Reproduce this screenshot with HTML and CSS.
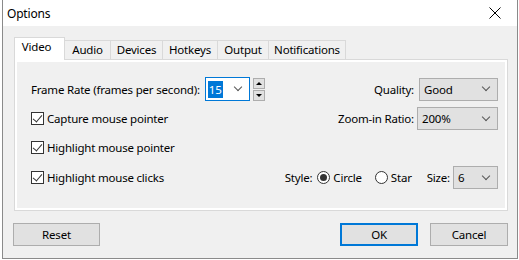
FILE: index.html
```html
<!DOCTYPE html>
<html lang="en">
  <head>
    <meta name="viewport" content="width=device-width, initial-scale=1.0" />
    <link rel="stylesheet" href="styles.css">
  </head>
  <body>
    <div class="window">
      <div class="titlebar">
        <span class="title">Options</span>
        <svg class="close" width="12" height="12" viewBox="0 0 12 12">
          <path d="M0.5 0.5 L11.5 11.5 M11.5 0.5 L0.5 11.5" stroke="#000" stroke-width="1" fill="none" />
        </svg>
      </div>

      <div class="content">
        <div class="tabs">
          <div class="tab selected tab-video">Video</div>
          <div class="tab tab-audio">Audio</div>
          <div class="tab tab-devices">Devices</div>
          <div class="tab tab-hotkeys">Hotkeys</div>
          <div class="tab tab-output">Output</div>
          <div class="tab tab-notify">Notifications</div>
        </div>

        <div class="panel">
          <div class="page">
            <div class="row row-1">
              <div class="group">
                <span class="label">Frame Rate (frames per second):</span>
                <div class="combo combo-edit">
                  <span class="sel">15</span>
                  <span class="chev"></span>
                </div>
                <div class="spin">
                  <div class="spin-btn"><span class="tri up"></span></div>
                  <div class="spin-btn"><span class="tri down"></span></div>
                </div>
              </div>
              <div class="group">
                <span class="label">Quality:</span>
                <div class="combo combo-quality"><span>Good</span><span class="chev"></span></div>
              </div>
            </div>

            <div class="row row-2">
              <label class="check"><span class="box"></span>Capture mouse pointer</label>
              <div class="group">
                <span class="label">Zoom-in Ratio:</span>
                <div class="combo combo-zoom"><span>200%</span><span class="chev"></span></div>
              </div>
            </div>

            <div class="row row-3">
              <label class="check"><span class="box"></span>Highlight mouse pointer</label>
            </div>

            <div class="row row-4">
              <label class="check"><span class="box"></span>Highlight mouse clicks</label>
              <div class="group">
                <span class="label">Style:</span>
                <span class="radio on"></span><span class="radio-text">Circle</span>
                <span class="radio"></span><span class="radio-text">Star</span>
                <span class="label size-label">Size:</span>
                <div class="combo combo-size"><span>6</span><span class="chev"></span></div>
              </div>
            </div>
          </div>
        </div>

        <div class="buttons">
          <div class="button btn-reset">Reset</div>
          <div class="spacer"></div>
          <div class="button btn-ok">OK</div>
          <div class="button btn-cancel">Cancel</div>
        </div>
      </div>
    </div>
  </body>
</html>
```

FILE: styles.css
```css
* {
  box-sizing: border-box;
}

body {
  margin: 0;
  background-color: #fff;
  font-family: "Noto Sans", sans-serif;
  font-size: 11.5px;
  letter-spacing: -0.2px;
  color: #000;
}

.window {
  width: 516px;
  height: 259px;
  margin-left: 2px;
  border: 1px solid #8a8a8a;
  border-top: none;
  background-color: #f0f0f0;
}

/* Title bar */
.titlebar {
  height: 26px;
  background-color: #fff;
  display: flex;
  align-items: center;
  padding-left: 4px;
  padding-right: 16px;
}

.title {
  flex: 1;
  font-size: 12px;
}

.close {
  display: block;
}

/* Tabs */
.content {
  padding: 11px 9px 0 11px;
}

.tabs {
  display: flex;
  align-items: flex-end;
  height: 23px;
  margin-bottom: -1px;
  position: relative;
  z-index: 1;
}

.tab {
  height: 20px;
  border: 1px solid #d9d9d9;
  border-left: none;
  background-color: #f0f0f0;
  text-align: center;
  line-height: 18px;
}

.tab.selected {
  height: 23px;
  border-left: 1px solid #d9d9d9;
  border-bottom: none;
  background-color: #fff;
  padding-right: 6px;
}

.tab-video { width: 51px; }
.tab-audio { width: 46px; }
.tab-devices { width: 52px; }
.tab-hotkeys { width: 55px; }
.tab-output { width: 51px; }
.tab-notify { width: 77px; }

.panel {
  width: 494px;
  border: 1px solid #d9d9d9;
  background-color: #fff;
  padding: 2px;
}

.page {
  background-color: #f0f0f0;
  padding: 12px 7px 15px 14px;
}

.row {
  display: flex;
  align-items: center;
  justify-content: space-between;
}

.row-1 { height: 30px; }
.row-2 { height: 29px; }
.row-3 { height: 29px; }
.row-4 { height: 31px; }

.group {
  display: flex;
  align-items: center;
}

/* Combo boxes */
.combo {
  height: 23px;
  margin-left: 5px;
  border: 1px solid #adadad;
  background-color: #e1e1e1;
  display: flex;
  align-items: center;
  justify-content: space-between;
  padding: 0 8px 0 4px;
}

.chev {
  width: 6px;
  height: 6px;
  border-right: 1px solid #555;
  border-bottom: 1px solid #555;
  transform: rotate(45deg);
  margin-top: -4px;
}

.combo-edit {
  width: 45px;
  height: 24px;
  background-color: #fff;
  border-color: #0078d7;
  padding-left: 2px;
}

.sel {
  background-color: #0078d7;
  color: #fff;
  padding: 1px 1px;
  line-height: 15px;
}

.combo-quality { width: 79px; }
.combo-zoom { width: 81px; margin-left: 3px; }
.combo-size { width: 45px; margin-left: 3px; }

.spin {
  margin-left: 3px;
  display: flex;
  flex-direction: column;
  gap: 1px;
}

.spin-btn {
  width: 12px;
  height: 11px;
  border: 1px solid #adadad;
  background-color: #e1e1e1;
  display: flex;
  align-items: center;
  justify-content: center;
}

.tri {
  width: 0;
  height: 0;
  border-left: 3px solid transparent;
  border-right: 3px solid transparent;
}

.tri.up { border-bottom: 3px solid #000; }
.tri.down { border-top: 3px solid #000; }

/* Checkboxes and radios */
.check {
  display: flex;
  align-items: center;
}

.box {
  width: 13px;
  height: 13px;
  border: 1px solid #333;
  background-color: #fff;
  margin-right: 3px;
  position: relative;
}

.box::after {
  content: "";
  position: absolute;
  left: 3px;
  top: 0px;
  width: 4px;
  height: 8px;
  border-right: 1px solid #333;
  border-bottom: 1px solid #333;
  transform: rotate(40deg);
}

.radio {
  width: 13px;
  height: 13px;
  border: 1px solid #333;
  border-radius: 50%;
  background-color: #fff;
  margin-left: 5px;
  margin-right: 3px;
  position: relative;
}

.radio.on::after {
  content: "";
  position: absolute;
  left: 2px;
  top: 2px;
  width: 7px;
  height: 7px;
  border-radius: 50%;
  background-color: #333;
}

.radio-text {
  margin-right: 8px;
}

.size-label {
  margin-left: 7px;
}

/* Buttons */
.buttons {
  display: flex;
  margin-top: 12px;
  margin-left: -1px;
}

.spacer {
  flex: 1;
}

.button {
  height: 23px;
  border: 1px solid #adadad;
  background-color: #e1e1e1;
  display: flex;
  align-items: center;
  justify-content: center;
}

.btn-reset { width: 87px; }
.btn-ok {
  width: 78px;
  border: 2px solid #0078d7;
}
.btn-cancel {
  width: 78px;
  margin-left: 12px;
}
```
